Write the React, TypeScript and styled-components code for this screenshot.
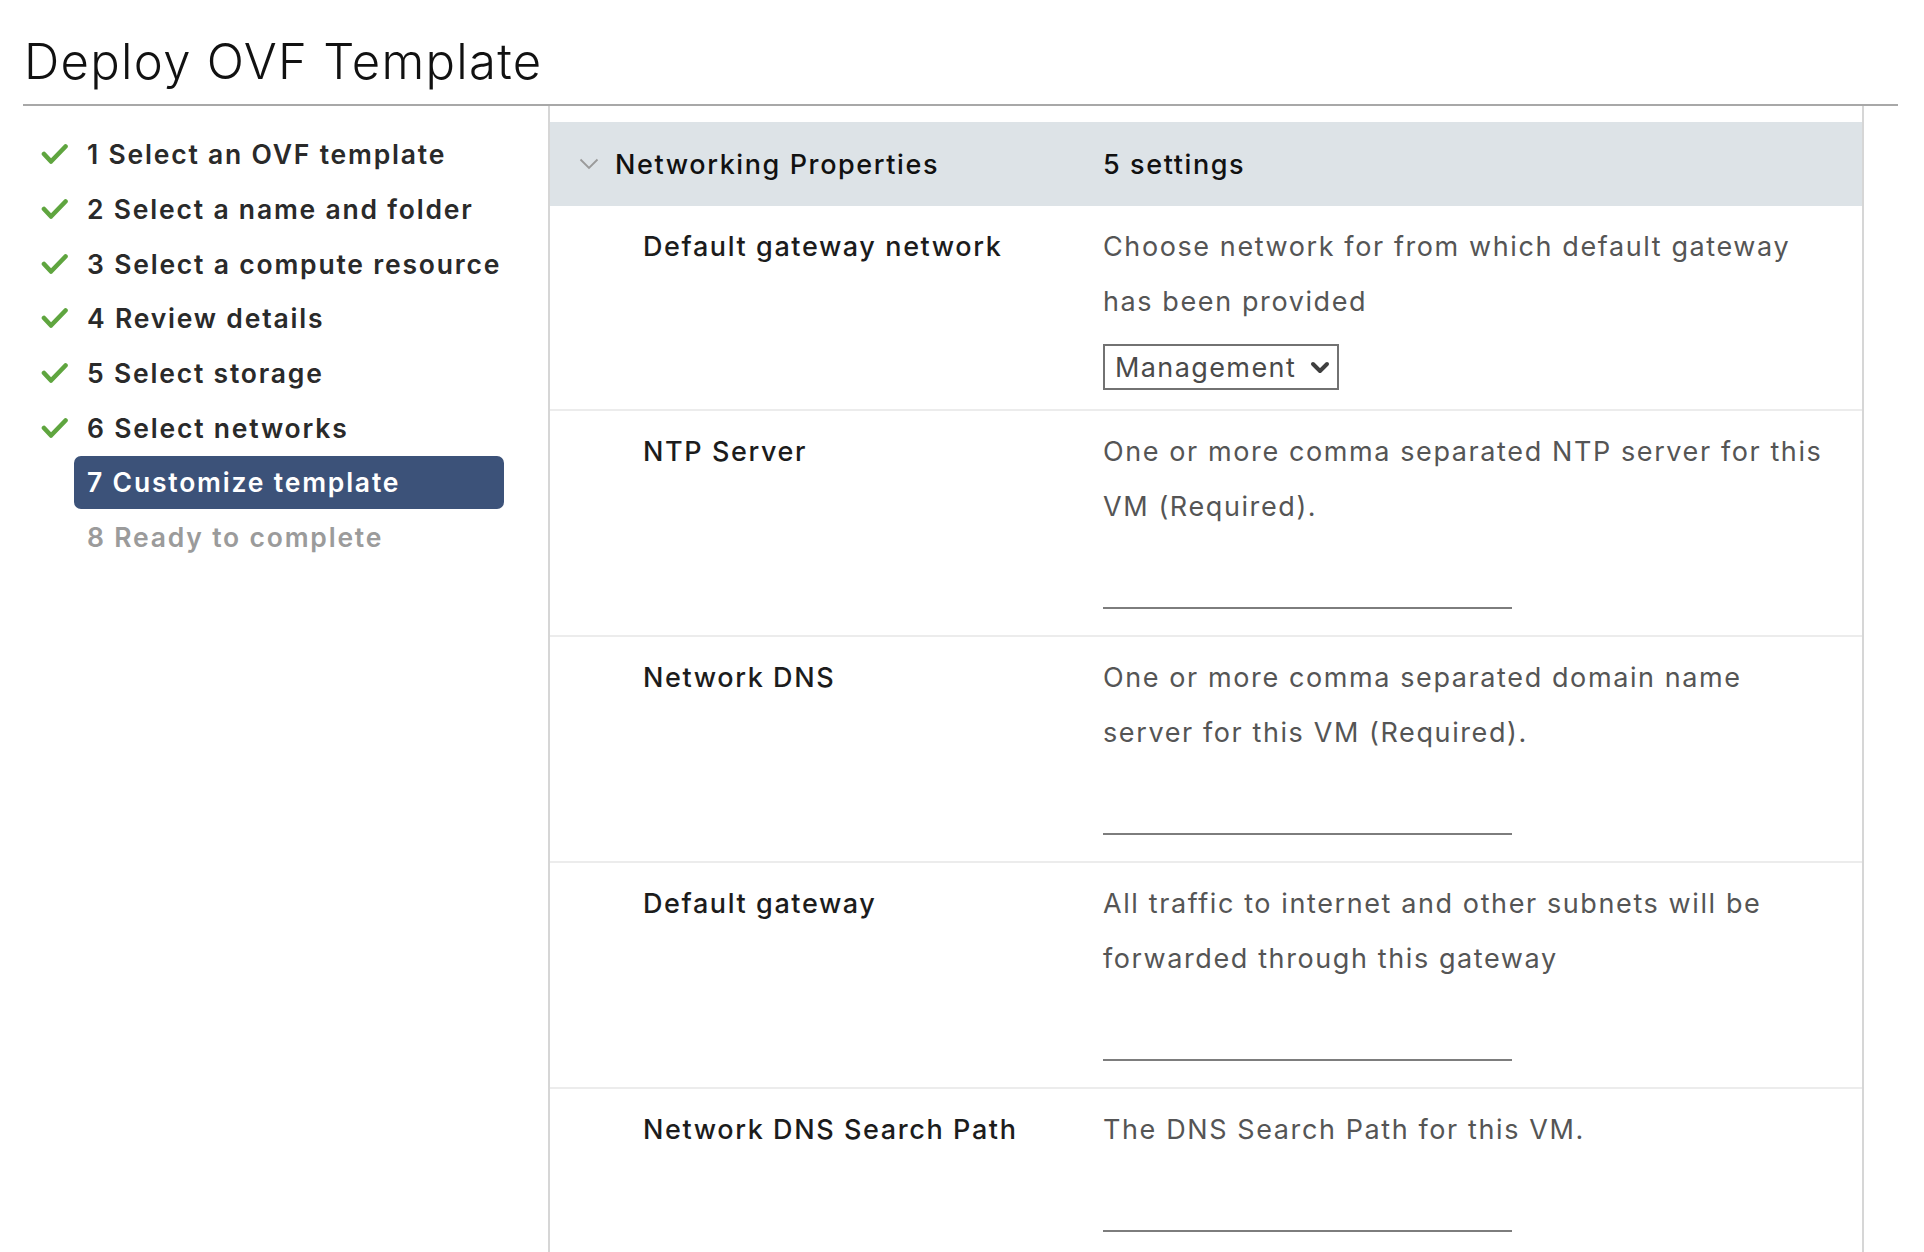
import React from "react";
import styled, { createGlobalStyle } from "styled-components";

const Global = createGlobalStyle`
  html, body { margin: 0; padding: 0; background: #fff; }
  body { font-family: Inter, "Noto Sans", sans-serif; color: #000; }
  * { box-sizing: border-box; }
`;

const Page = styled.div`
  padding: 0 26px 0 23px;
  width: 1924px;
  height: 1252px;
  overflow: hidden;
`;

const TitleBar = styled.header`
  height: 106px;
  border-bottom: 2px solid #a8a8a8;
  display: flex;
  align-items: flex-end;
  padding: 0 0 12px 1px;
`;

const Title = styled.h1`
  margin: 0;
  font-size: 49px;
  font-weight: 300;
  line-height: 60px;
  letter-spacing: 1.3px;
  color: #111;
`;

const Body = styled.div`
  display: flex;
  align-items: stretch;
  height: 1146px;
`;

const Nav = styled.nav`
  width: 525px;
  padding: 21px 0 0 18px;
  display: flex;
  flex-direction: column;
`;

const NavItem = styled.div`
  display: flex;
  align-items: center;
  height: 54.7px;
`;

const CheckSlot = styled.span`
  width: 33px;
  display: flex;
  align-items: center;
`;

const NavLabel = styled.span<{ $state: "done" | "active" | "todo" }>`
  width: 430px;
  height: 53px;
  padding: 0 13px;
  display: flex;
  align-items: center;
  border-radius: 7px;
  font-size: 26.5px;
  font-weight: 600;
  letter-spacing: 1.8px;
  white-space: nowrap;
  background: ${(p) => (p.$state === "active" ? "#3c5279" : "transparent")};
  color: ${(p) =>
    p.$state === "active" ? "#ffffff" : p.$state === "todo" ? "#9b9b9b" : "#2a2a2a"};
`;

const Pane = styled.section`
  width: 1316px;
  border-left: 2px solid #d6d6d6;
  border-right: 2px solid #d6d6d6;
  padding-top: 16px;
`;

const GroupHeader = styled.div`
  height: 84px;
  background: #dde3e7;
  display: grid;
  grid-template-columns: 553px 1fr;
  align-items: center;
  font-size: 27px;
  font-weight: 500;
  letter-spacing: 1.6px;
  color: #111;
`;

const GroupTitle = styled.div`
  display: flex;
  align-items: center;
  gap: 16px;
  padding-left: 29px;
`;

const Row = styled.div`
  display: grid;
  grid-template-columns: 460px 1fr;
  padding: 13px 20px 0 93px;
  border-bottom: 2px solid #ececec;
`;

const Label = styled.div`
  font-size: 27px;
  font-weight: 500;
  line-height: 55px;
  letter-spacing: 1.6px;
  color: #1c1c1c;
  white-space: nowrap;
`;

const Field = styled.div`
  display: flex;
  flex-direction: column;
  align-items: flex-start;
`;

const Desc = styled.div`
  font-size: 27px;
  font-weight: 400;
  line-height: 55px;
  letter-spacing: 1.6px;
  color: #555;
  white-space: nowrap;
`;

const Select = styled.div`
  margin: 15px 0 19px;
  width: 236px;
  height: 46px;
  border: 2px solid #727272;
  display: flex;
  align-items: center;
  justify-content: space-between;
  padding: 0 7px 0 10px;
  font-size: 27px;
  letter-spacing: 1.4px;
  color: #4a4a4a;
  white-space: nowrap;
`;

const Underline = styled.div`
  width: 409px;
  height: 75px;
  border-bottom: 2px solid #7d7d7d;
  margin-bottom: 26px;
`;

const Check = () => (
  <svg width="27" height="22" viewBox="0 0 27 22">
    <polyline
      points="3,11 10,18.5 24.5,3.5"
      fill="none"
      stroke="#5fa53f"
      strokeWidth="4.6"
      strokeLinecap="round"
      strokeLinejoin="round"
    />
  </svg>
);

const Chevron = () => (
  <svg width="20" height="12" viewBox="0 0 20 12">
    <polyline points="1.5,1.5 10,10 18.5,1.5" fill="none" stroke="#9a9a9a" strokeWidth="1.8" />
  </svg>
);

const SelectCaret = () => (
  <svg width="20" height="13" viewBox="0 0 20 13">
    <polyline
      points="3,3 10,10 17,3"
      fill="none"
      stroke="#3f3f3f"
      strokeWidth="4"
      strokeLinecap="round"
      strokeLinejoin="round"
    />
  </svg>
);

const steps: { n: number; text: string; state: "done" | "active" | "todo" }[] = [
  { n: 1, text: "Select an OVF template", state: "done" },
  { n: 2, text: "Select a name and folder", state: "done" },
  { n: 3, text: "Select a compute resource", state: "done" },
  { n: 4, text: "Review details", state: "done" },
  { n: 5, text: "Select storage", state: "done" },
  { n: 6, text: "Select networks", state: "done" },
  { n: 7, text: "Customize template", state: "active" },
  { n: 8, text: "Ready to complete", state: "todo" },
];

const rows: { label: string; desc: string[]; kind: "select" | "input" }[] = [
  {
    label: "Default gateway network",
    desc: ["Choose network for from which default gateway", "has been provided"],
    kind: "select",
  },
  {
    label: "NTP Server",
    desc: ["One or more comma separated NTP server for this", "VM (Required)."],
    kind: "input",
  },
  {
    label: "Network DNS",
    desc: ["One or more comma separated domain name", "server for this VM (Required)."],
    kind: "input",
  },
  {
    label: "Default gateway",
    desc: ["All traffic to internet and other subnets will be", "forwarded through this gateway"],
    kind: "input",
  },
  {
    label: "Network DNS Search Path",
    desc: ["The DNS Search Path for this VM."],
    kind: "input",
  },
];

export default function App() {
  return (
    <Page>
      <Global />
      <TitleBar>
        <Title>Deploy OVF Template</Title>
      </TitleBar>
      <Body>
        <Nav>
          {steps.map((s) => (
            <NavItem key={s.n}>
              <CheckSlot>{s.state === "done" && <Check />}</CheckSlot>
              <NavLabel $state={s.state}>
                {s.n} {s.text}
              </NavLabel>
            </NavItem>
          ))}
        </Nav>
        <Pane>
          <GroupHeader>
            <GroupTitle>
              <Chevron />
              <span>Networking Properties</span>
            </GroupTitle>
            <span>5 settings</span>
          </GroupHeader>
          {rows.map((r) => (
            <Row key={r.label}>
              <Label>{r.label}</Label>
              <Field>
                <Desc>
                  {r.desc.map((line, i) => (
                    <React.Fragment key={i}>
                      {i > 0 && <br />}
                      {line}
                    </React.Fragment>
                  ))}
                </Desc>
                {r.kind === "select" ? (
                  <Select>
                    <span>Management</span>
                    <SelectCaret />
                  </Select>
                ) : (
                  <Underline />
                )}
              </Field>
            </Row>
          ))}
        </Pane>
      </Body>
    </Page>
  );
}
